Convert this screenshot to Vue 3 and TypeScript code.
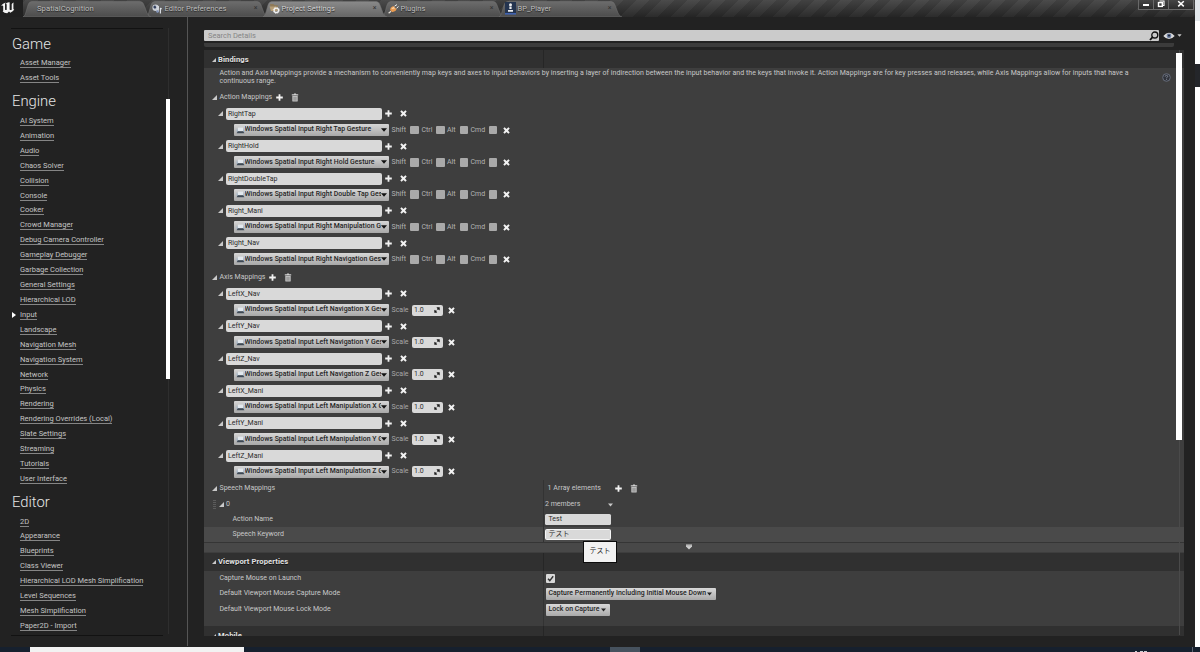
<script setup lang="ts">
interface Tab { label: string; icon: string; width: number; active?: boolean }
interface Section { title: string; items: string[] }

const tabs: Tab[] = [
  { label: 'SpatialCognition', icon: '', width: 128 },
  { label: 'Editor Preferences', icon: 'prefs', width: 122 },
  { label: 'Project Settings', icon: 'project', width: 124, active: true },
  { label: 'Plugins', icon: 'plug', width: 122 },
  { label: 'BP_Player', icon: 'pawn', width: 123 },
]

const sections: Section[] = [
  { title: 'Game', items: ['Asset Manager', 'Asset Tools'] },
  {
    title: 'Engine',
    items: ['AI System', 'Animation', 'Audio', 'Chaos Solver', 'Collision', 'Console', 'Cooker', 'Crowd Manager',
      'Debug Camera Controller', 'Gameplay Debugger', 'Garbage Collection', 'General Settings', 'Hierarchical LOD',
      'Input', 'Landscape', 'Navigation Mesh', 'Navigation System', 'Network', 'Physics', 'Rendering',
      'Rendering Overrides (Local)', 'Slate Settings', 'Streaming', 'Tutorials', 'User Interface'],
  },
  {
    title: 'Editor',
    items: ['2D', 'Appearance', 'Blueprints', 'Class Viewer', 'Hierarchical LOD Mesh Simplification',
      'Level Sequences', 'Mesh Simplification', 'Paper2D - Import'],
  },
]

const actions = [
  { name: 'RightTap', key: 'Windows Spatial Input Right Tap Gesture' },
  { name: 'RightHold', key: 'Windows Spatial Input Right Hold Gesture' },
  { name: 'RightDoubleTap', key: 'Windows Spatial Input Right Double Tap Gesture' },
  { name: 'Right_Mani', key: 'Windows Spatial Input Right Manipulation Gesture' },
  { name: 'Right_Nav', key: 'Windows Spatial Input Right Navigation Gesture' },
]
const axes = [
  { name: 'LeftX_Nav', key: 'Windows Spatial Input Left Navigation X Gesture' },
  { name: 'LeftY_Nav', key: 'Windows Spatial Input Left Navigation Y Gesture' },
  { name: 'LeftZ_Nav', key: 'Windows Spatial Input Left Navigation Z Gesture' },
  { name: 'LeftX_Mani', key: 'Windows Spatial Input Left Manipulation X Gesture' },
  { name: 'LeftY_Mani', key: 'Windows Spatial Input Left Manipulation Y Gesture' },
  { name: 'LeftZ_Mani', key: 'Windows Spatial Input Left Manipulation Z Gesture' },
]
const modifiers = [
  { label: 'Shift', cls: 'm-shift' },
  { label: 'Ctrl', cls: 'm-ctrl' },
  { label: 'Alt', cls: 'm-alt' },
  { label: 'Cmd', cls: 'm-cmd' },
]
</script>

<template>
  <div class="screen">
    <svg class="defs" width="0" height="0">
      <symbol id="i-caret" viewBox="0 0 5 5"><path d="M5 0V5H0Z" fill="#c9c9c9" /></symbol>
      <symbol id="i-plus" viewBox="0 0 7 7"><path d="M2.6 0.2H4.4V2.6H6.8V4.4H4.4V6.8H2.6V4.4H0.2V2.6H2.6Z" fill="#f2f2f2" /></symbol>
      <symbol id="i-x" viewBox="0 0 7 7"><path d="M0.3 1.5L1.6 0.3L3.5 1.9L5.4 0.3L6.7 1.5L5 3.5L6.7 5.5L5.4 6.7L3.5 5.1L1.6 6.7L0.3 5.5L2 3.5Z" fill="#f2f2f2" /></symbol>
      <symbol id="i-trash" viewBox="0 0 8 9">
        <path d="M0.8 1.3H2.7L3.2 0.4H4.8L5.3 1.3H7.2V2.4H0.8Z" fill="#d0d0d0" />
        <path d="M1.3 3H6.7V7.9Q6.7 8.6 6 8.6H2Q1.3 8.6 1.3 7.9Z" fill="#c4c4c4" />
        <path d="M2.9 3.8V7.7M4 3.8V7.7M5.1 3.8V7.7" stroke="#666" stroke-width="0.5" />
      </symbol>
      <symbol id="i-down" viewBox="0 0 6 4"><path d="M0 0.3H6L3 3.7Z" fill="currentColor" /></symbol>
      <symbol id="i-key" viewBox="0 0 9 7">
        <path d="M0.8 1.2Q2 3.8 1.4 5H7.6Q7 3.8 8.2 1.2V5H0.8Z" fill="#8db4dc" />
        <path d="M2 0.6H7V4H2Z" fill="#e2e8ee" />
        <path d="M1.8 4.2H7.2L8.4 6.2H0.6Z" fill="#3c4855" />
      </symbol>
    </svg>

    <div class="window">
      <header class="titlebar">
        <div class="brand">
          <svg width="16" height="16" viewBox="0 0 16 16">
            <path d="M1 5.8Q2.8 3.6 5.8 2.6Q4.8 3.6 5 4.8V9.4Q5.6 10.6 6.7 9.8V4.7Q6.7 3.8 5.8 3.6Q8 2.2 9.6 2.3V9.5Q10.4 10.6 11.7 9.7V4.2Q12 3 13.8 2.4Q13.4 3.2 13.4 4.2V9Q13.9 9.5 14.4 8.9Q13.2 11.8 10.3 12.8L9 11.4L7.2 13.2Q4 13 2.6 11.2Q3.2 11.2 3.2 10.2V6.2Q2.8 5 1 5.8Z" fill="#f4f4f4" />
          </svg>
        </div>
        <nav class="tabs">
          <div v-for="t in tabs" :key="t.label" class="tab" :class="{ active: t.active, first: !t.icon }" :style="{ width: t.width + 'px' }">
            <svg class="tab-shape" width="100%" height="16" :viewBox="`0 0 ${t.width} 16`">
              <defs>
                <linearGradient id="tabFill" x1="0" y1="0" x2="0" y2="1"><stop offset="0" stop-color="#6c6c6c" /><stop offset="1" stop-color="#4c4c4c" /></linearGradient>
                <linearGradient id="tabOn" x1="0" y1="0" x2="0" y2="1"><stop offset="0" stop-color="#8a8a8a" /><stop offset="1" stop-color="#666" /></linearGradient>
              </defs>
              <path :d="`M0 16Q2 15 3 11L5 4Q6 0.5 9 0.5H${t.width - 11}Q${t.width - 8} 0.5 ${t.width - 7} 4L${t.width - 4} 12Q${t.width - 2} 16 ${t.width} 16Z`" :fill="t.active ? 'url(#tabOn)' : 'url(#tabFill)'" stroke="#757575" stroke-width="0.5" />
            </svg>
            <span class="tab-icon">
              <svg v-if="t.icon === 'prefs'" width="10" height="10" viewBox="0 0 10 10">
                <circle cx="3.6" cy="3.8" r="3.2" fill="#c9cdd5" /><path d="M1 3L3 1.2L4.4 3.2L3 5Z" fill="#33405e" />
                <path d="M6.2 2V8M6.2 8L4.6 6.8M8.4 4V9.4M8.4 4L9.6 5" stroke="#dfe3ea" stroke-width="1.1" fill="none" /><circle cx="5.5" cy="7.5" r="1.3" fill="#7f90b5" />
              </svg>
              <svg v-else-if="t.icon === 'project'" width="11" height="11" viewBox="0 0 11 11">
                <path d="M1 1H4.5L5.5 2.2H9V7H2Z" fill="#8f7a58" /><path d="M0.5 3.5H7L8.6 8H2Z" fill="#b59d76" />
                <circle cx="7.3" cy="7.3" r="2.2" fill="none" stroke="#f2f2f2" stroke-width="1.3" /><circle cx="7.3" cy="7.3" r="3.1" fill="none" stroke="#f2f2f2" stroke-width="0.8" stroke-dasharray="1.2 1.24" />
              </svg>
              <svg v-else-if="t.icon === 'plug'" width="11" height="10" viewBox="0 0 11 10">
                <path d="M0.6 9.2L3 7.2" stroke="#e6e0d8" stroke-width="1.2" /><path d="M2.2 6Q2 3 5.4 2L8.6 5.2Q7.4 8.4 4 8Z" fill="#e89a50" /><path d="M3.4 5Q4 3.4 5.8 3L7 4.4Z" fill="#ffd9ad" />
                <path d="M6.5 2.2L9 0.6M8.6 4.4L10.4 2.4" stroke="#f0f0f0" stroke-width="1" />
              </svg>
              <svg v-else-if="t.icon === 'pawn'" width="11" height="13" viewBox="0 0 11 13">
                <rect width="11" height="11" fill="#24344f" /><rect y="11" width="11" height="1.6" fill="#3f62b0" />
                <circle cx="5.5" cy="2.8" r="1.5" fill="#eee" /><path d="M4.4 4.6H6.6V7H4.4ZM3 8H8V9.8H3Z" fill="#eee" />
              </svg>
            </span>
            <span class="tab-label">{{ t.label }}</span>
            <span v-if="t.icon" class="tab-close">×</span>
          </div>
        </nav>
        <div class="win-buttons">
          <span class="wb"><svg width="8" height="8" viewBox="0 0 8 8"><rect x="1" y="4" width="6" height="2" fill="#fff" /></svg></span>
          <span class="wb"><svg width="8" height="8" viewBox="0 0 8 8"><path d="M2.5 1H7V5.5H5.8" fill="none" stroke="#fff" stroke-width="1.1" /><rect x="1.5" y="2.6" width="3.8" height="3.8" fill="none" stroke="#fff" stroke-width="1.4" /></svg></span>
          <span class="wb wide"><svg width="8" height="8" viewBox="0 0 8 8"><path d="M1.2 1.2L6.8 6.4M6.8 1.2L1.2 6.4" stroke="#fff" stroke-width="1.5" /></svg></span>
        </div>
      </header>

      <div class="content">
        <aside class="sidebar">
          <div class="side-list">
            <section v-for="s in sections" :key="s.title">
              <h2>{{ s.title }}</h2>
              <div v-for="i in s.items" :key="i" class="side-row">
                <svg class="marker" width="4" height="6" viewBox="0 0 4 6"><path v-if="i === 'Input'" d="M0 0L4 3L0 6Z" fill="#fff" /></svg>
                <a>{{ i }}</a>
              </div>
            </section>
          </div>
          <div class="side-scroll"><div class="side-thumb"></div></div>
        </aside>

        <main class="details">
          <div class="search-row">
            <div class="search">
              <span>Search Details</span>
              <svg width="10" height="10" viewBox="0 0 10 10"><circle cx="5.8" cy="4" r="3" fill="none" stroke="#111" stroke-width="1.3" /><path d="M3.6 6.2L1 9" stroke="#111" stroke-width="1.8" /></svg>
            </div>
            <svg class="eye" width="12" height="8" viewBox="0 0 12 8"><path d="M0.3 4Q6 -2.6 11.7 4Q6 10.2 0.3 4Z" fill="#dcdcdc" /><circle cx="6" cy="3.8" r="2.4" fill="#6d7fa3" /><circle cx="6" cy="3.6" r="1.1" fill="#20283a" /></svg>
            <svg class="eye-down" width="5" height="3" viewBox="0 0 6 4"><use href="#i-down" /></svg>
          </div>

          <div class="strip"></div>

          <div class="scroll-area">
            <div class="cat-head">
              <svg width="4" height="4"><use href="#i-caret" /></svg><span>Bindings</span>
            </div>
            <div class="cat-body">
              <div class="desc">
                <p>Action and Axis Mappings provide a mechanism to conveniently map keys and axes to input behaviors by inserting a layer of indirection between the input behavior and the keys that invoke it. Action Mappings are for key presses and releases, while Axis Mappings allow for inputs that have a<br>continuous range.</p>
                <svg width="9" height="9" viewBox="0 0 9 9"><circle cx="4.5" cy="4.5" r="3.8" fill="#30333b" stroke="#666c7a" stroke-width="1" /><path d="M3.2 3.6Q3.3 2.4 4.5 2.4Q5.9 2.5 5.7 3.7Q5.5 4.3 4.6 4.7V5.3M4.6 6V6.9" fill="none" stroke="#858b99" stroke-width="0.9" /></svg>
              </div>

              <div class="group g-action">
                <svg width="5" height="5"><use href="#i-caret" /></svg><span>Action Mappings</span>
                <svg class="g-plus" width="7" height="7"><use href="#i-plus" /></svg>
                <svg class="g-trash" width="8" height="9"><use href="#i-trash" /></svg>
              </div>
              <template v-for="a in actions" :key="a.name">
                <div class="name-row">
                  <svg width="5" height="5"><use href="#i-caret" /></svg>
                  <div class="name-input">{{ a.name }}</div>
                  <svg class="n-plus" width="7" height="7"><use href="#i-plus" /></svg>
                  <svg class="n-x" width="7" height="7"><use href="#i-x" /></svg>
                </div>
                <div class="key-row">
                  <div class="combo"><svg width="9" height="7"><use href="#i-key" /></svg><span>{{ a.key }}</span><svg class="c-down" width="6" height="4"><use href="#i-down" /></svg></div>
                  <div v-for="m in modifiers" :key="m.label" class="mod" :class="m.cls"><span>{{ m.label }}</span><i></i></div>
                  <svg class="k-x" width="7" height="7"><use href="#i-x" /></svg>
                </div>
              </template>

              <div class="group g-axis">
                <svg width="5" height="5"><use href="#i-caret" /></svg><span>Axis Mappings</span>
                <svg class="g-plus" width="7" height="7"><use href="#i-plus" /></svg>
                <svg class="g-trash" width="8" height="9"><use href="#i-trash" /></svg>
              </div>
              <template v-for="a in axes" :key="a.name">
                <div class="name-row">
                  <svg width="5" height="5"><use href="#i-caret" /></svg>
                  <div class="name-input">{{ a.name }}</div>
                  <svg class="n-plus" width="7" height="7"><use href="#i-plus" /></svg>
                  <svg class="n-x" width="7" height="7"><use href="#i-x" /></svg>
                </div>
                <div class="key-row">
                  <div class="combo"><svg width="9" height="7"><use href="#i-key" /></svg><span>{{ a.key }}</span><svg class="c-down" width="6" height="4"><use href="#i-down" /></svg></div>
                  <span class="scale-label">Scale</span>
                  <div class="scale"><span>1.0</span><svg width="6" height="6" viewBox="0 0 6 6"><path d="M2.4 0.3H5.7V3.6L4.6 2.5L3.9 3.1L2.9 2.1L3.5 1.4ZM0.3 2.8L1.3 3.6L2 3.2L2.8 4L2.4 4.7L3.2 5.7H0.3Z" fill="#1b1b1b" /></svg></div>
                  <svg class="s-x" width="7" height="7"><use href="#i-x" /></svg>
                </div>
              </template>

              <div class="prop speech">
                <div class="left l1"><svg width="5" height="5"><use href="#i-caret" /></svg><span>Speech Mappings</span></div>
                <div class="right r-array"><span>1 Array elements</span><svg width="7" height="7"><use href="#i-plus" /></svg><svg class="g-trash" width="8" height="9"><use href="#i-trash" /></svg></div>
              </div>
              <div class="prop zero">
                <div class="left l2"><i class="grip"></i><svg width="5" height="5"><use href="#i-caret" /></svg><span>0</span></div>
                <div class="right r-mem"><span>2 members</span><svg width="5" height="4"><use href="#i-down" /></svg></div>
              </div>
              <div class="prop small">
                <div class="left l3">Action Name</div>
                <div class="right"><div class="text-input">Test</div></div>
              </div>
              <div class="prop small hover">
                <div class="left l3">Speech Keyword</div>
                <div class="right"><div class="text-input focus">テスト</div><div class="tooltip">テスト</div></div>
              </div>
              <div class="expander"><svg width="6" height="6" viewBox="0 0 6 6"><path d="M0 0.5H6V2.4L3 5.4L0 2.4Z" fill="#d0d0d0" /><path d="M0 1.8H6" stroke="#999" stroke-width="0.6" /></svg></div>
            </div>

            <div class="cat-head">
              <svg width="4" height="4"><use href="#i-caret" /></svg><span>Viewport Properties</span>
            </div>
            <div class="cat-body viewport">
              <div class="prop v1">
                <div class="left l4">Capture Mouse on Launch</div>
                <div class="right"><div class="check"><svg width="7" height="7" viewBox="0 0 7 7"><path d="M1 3.8L2.8 5.6L6.2 1.2" fill="none" stroke="#333" stroke-width="1.4" /></svg></div></div>
              </div>
              <div class="prop v2">
                <div class="left l4">Default Viewport Mouse Capture Mode</div>
                <div class="right"><div class="combo2 wide2"><span>Capture Permanently Including Initial Mouse Down</span><svg width="5" height="4"><use href="#i-down" /></svg></div></div>
              </div>
              <div class="prop v2">
                <div class="left l4">Default Viewport Mouse Lock Mode</div>
                <div class="right"><div class="combo2 narrow2"><span>Lock on Capture</span><svg width="5" height="4"><use href="#i-down" /></svg></div></div>
              </div>
            </div>
            <div class="cat-head">
              <svg width="4" height="4"><use href="#i-caret" /></svg><span>Mobile</span>
            </div>
            <div class="main-scroll"><div class="main-thumb"></div></div>
          </div>
        </main>
      </div>
    </div>

    <div class="desktop-edge"><i class="e1"></i><i class="e2"></i><i class="e3"></i></div>
    <footer class="taskbar">
      <i class="t-search"></i><i class="t-active"></i>
      <svg class="t-clock" width="12" height="2" viewBox="0 0 12 2"><path d="M0 1.5H2M5 1.5H8M9 1.5H12" stroke="#c8ccd2" stroke-width="1" /></svg>
      <i class="t-peek"></i>
    </footer>
  </div>
</template>

<style>
html, body { margin: 0; background: #222; overflow: hidden; }
</style>

<style scoped>
* { box-sizing: border-box; }
.screen { width: 1200px; height: 652px; display: grid; grid-template-columns: 1195px 5px; grid-template-rows: 647px 5px; overflow: hidden; background: #222; color: #c8c8c8; font: 7px/9px Roboto, "Noto Sans CJK JP", sans-serif; white-space: nowrap; }
.screen svg { display: block; flex: none; }
.defs { position: absolute; }
.window { display: flex; flex-direction: column; min-width: 0; background: #222; overflow: hidden; }

.titlebar { height: 17px; display: flex; flex: none; background: linear-gradient(rgba(255,255,255,.06), rgba(0,0,0,.32)), repeating-linear-gradient(135deg, #404040 0 9px, #363636 9px 18px); }
.brand { width: 23px; height: 17px; background: #202020; }
.tabs { display: flex; padding-top: 1px; }
.tab { position: relative; display: flex; align-items: center; height: 16px; margin-right: -5px; padding: 0 0 1px 6px; color: #bdbdbd; font-size: 7.5px; text-shadow: 0 1px 1px #222; }
.tab.active { z-index: 2; color: #d2d2d2; }
.tab-shape { position: absolute; inset: 0; }
.tab-icon { position: relative; width: 12.5px; flex: none; }
.tab.first .tab-icon { width: 8px; }
.tab.first { z-index: 1; font-size: 7.7px; padding-bottom: 2px; }
.tab-label { position: relative; letter-spacing: .03px; }
.tab-close { position: relative; margin-left: auto; margin-right: 10.5px; color: #333; font-size: 7px; text-shadow: none; }
.win-buttons { display: flex; margin-left: auto; height: 9.5px; margin-right: 1px; }
.wb { width: 15px; display: flex; justify-content: center; align-items: center; border: 1px solid #696969; border-top: 0; border-right: 0; background: linear-gradient(#454545, #2c2c2c); }
.wb.wide { width: 26px; border-right: 1px solid #696969; }

.content { flex: 1; display: flex; min-height: 0; }
.sidebar { width: 188px; height: 629px; display: flex; flex: none; border-right: 1px solid #555; padding-top: 11px; }
.side-list { width: 152px; height: 608px; margin-left: 11px; border-top: 1.5px solid #121212; border-bottom: 1.5px solid #121212; overflow: hidden; }
h2 { margin: 0; height: 27.6px; padding: 4px 0 0 1px; font: 300 14.8px/25px Roboto, sans-serif; color: #e6e6e6; }
section:first-child h2 { margin-top: -1.2px; }
.side-row { height: 14.93px; display: flex; align-items: center; padding-top: 1.2px; font-size: 7.5px; line-height: 9px; color: #c4c4c4; }
.marker { margin: 0 4px 0 1px; }
.side-row a { border-bottom: 1px solid #858585; height: 10px; line-height: 10px; }
.side-scroll { width: 5px; margin-left: 2.5px; height: 606px; background: linear-gradient(90deg, transparent 2px, #2e2e2e 2px 3px, transparent 3px); }
.side-thumb { width: 4.5px; height: 280px; margin-top: 71px; background: #fff; }

.details { flex: 1; min-width: 0; padding: 13px 0 0 16px; display: flex; flex-direction: column; }
.search-row { display: flex; align-items: center; height: 11px; }
.search { width: 955px; height: 11px; background: #cbcbcb; border-radius: 1px; display: flex; align-items: center; justify-content: space-between; padding-left: 4px; color: #868686; font-size: 7.5px; }
.eye { margin-left: 4px; }
.eye-down { margin-left: 2px; color: #c8c8c8; }
.strip { width: 970px; height: 3.5px; margin-top: 2px; background: #3b3b3b; border-radius: 0 0 2px 2px; }
.scroll-area { position: relative; width: 980px; height: 586px; margin-top: 3.5px; overflow: hidden; }
.cat-head { height: 18px; display: flex; align-items: center; gap: 2px; padding-left: 8px; color: #e2e2e2; font-size: 7.6px; font-weight: 700; letter-spacing: .1px; background: linear-gradient(90deg, transparent 339px, #262626 339px 340px, transparent 340px), #303030; text-shadow: 0 1px 0 #111; }
.cat-head svg { margin-top: 1px; }
.cat-body { height: 484.5px; background: #3e3e3e; }
.desc { height: 21.5px; display: flex; padding-top: 1px; }
.desc p { margin: 0 0 0 15.5px; width: 938px; line-height: 8.4px; font-size: 7px; letter-spacing: .038px; }
.desc svg { margin-top: 4px; margin-left: 4px; }
.group { display: flex; align-items: center; padding-left: 8px; }
.group span { margin-left: 2.5px; }
.g-action { height: 16.3px; }
.g-axis { height: 18.3px; padding-top: 1px; }
.g-plus { margin-left: 4px; }
.g-trash { margin-left: 8px; }
.name-row { height: 16.185px; display: flex; align-items: center; padding-left: 14px; }
.name-input { width: 156px; height: 12px; margin-left: 3px; padding-left: 2px; border-radius: 2px; background: #d9d9d9; color: #2b2b2b; line-height: 12.6px; }
.n-plus { margin-left: 3px; }
.n-x { margin-left: 8px; }
.key-row { height: 16.185px; display: flex; align-items: center; padding-left: 30px; }
.combo { width: 154.5px; height: 12px; display: flex; align-items: center; padding: 0 1px 0 1.5px; background: linear-gradient(#d6d6d6, #a8a8a8); border-radius: 1px; color: #242424; font-weight: 500; font-size: 6.9px; }
.combo span { width: 136.5px; overflow: hidden; flex: none; letter-spacing: .04px; line-height: 9.6px; }
.c-down { color: #111; }
.mod { display: flex; align-items: center; justify-content: space-between; color: #b4b4b4; }
.mod i { width: 8.5px; height: 8.5px; border-radius: 1px; background: #a9a9a9; }
.m-shift { width: 27px; margin-left: 3px; }
.m-ctrl { width: 23px; margin-left: 3px; }
.m-alt { width: 21px; margin-left: 2.5px; }
.m-cmd { width: 26.5px; margin-left: 2.5px; }
.k-x { margin-left: 6px; }
.scale-label { width: 20px; margin-left: 3px; color: #a8a8a8; }
.scale { width: 31px; height: 11px; display: flex; align-items: center; justify-content: space-between; padding: 0 3px 0 2.5px; border-radius: 2px; background: #d9d9d9; color: #2b2b2b; }
.s-x { margin-left: 5px; }

.prop { display: flex; }
.left { width: 340px; display: flex; align-items: center; border-right: 1px solid #333; flex: none; padding-top: 1px; }
.right { display: flex; align-items: center; position: relative; padding-left: 1px; }
.speech { height: 16.5px; }
.zero { height: 15.6px; }
.small { height: 15px; }
.hover { background: #4a4a4a; }
.l1 { padding-left: 8px; gap: 2.5px; }
.l2 { padding-left: 9px; gap: 2.5px; }
.grip { width: 3px; height: 9px; background: repeating-linear-gradient(#5c5c5c 0 1px, transparent 1px 2px); }
.l3 { padding-left: 28.5px; }
.l4 { padding-left: 15.5px; }
.r-array { padding-left: 3.5px; padding-top: 1px; letter-spacing: .07px; }
.r-array span { width: 67.5px; }
.r-mem { padding-top: 1px; }
.r-mem span { width: 62.5px; }
.r-mem svg { color: #c8c8c8; }
.text-input { width: 66px; height: 10.5px; padding-left: 3.5px; border-radius: 1.5px; background: #d9d9d9; color: #2b2b2b; line-height: 11px; }
.text-input.focus { border: 1px solid #f6f6f6; padding-left: 2.5px; line-height: 8.5px; }
.tooltip { position: absolute; z-index: 5; left: 39px; top: 14px; width: 34px; height: 22px; border: 1px solid #0c0c0c; background: #f2f2f2; color: #222; display: flex; align-items: center; justify-content: center; }
.expander { height: 10px; display: flex; justify-content: center; align-items: center; padding-right: 11px; background: #484848; border-top: 1px solid #353535; }
.viewport { height: 55.5px; background: linear-gradient(90deg, transparent 339px, #333 339px 340px, transparent 340px), #3e3e3e; }
.v1 { height: 15px; }
.v2 { height: 16px; }
.viewport .left { border-color: transparent; padding-top: 0; }
.viewport .right { padding-left: 1.5px; }
.check { width: 9px; height: 9px; border-radius: 1px; background: #d9d9d9; display: flex; align-items: center; justify-content: center; }
.combo2 { height: 12px; display: flex; align-items: center; justify-content: space-between; padding: 0 4px 0 3px; background: linear-gradient(#d8d8d8, #a9a9a9); border-radius: 1px; color: #242424; font-weight: 500; font-size: 6.9px; letter-spacing: .04px; }
.wide2 { width: 170.5px; }
.narrow2 { width: 64.5px; }
.main-scroll { position: absolute; top: 0; right: 2px; width: 6px; height: 585px; background: linear-gradient(90deg, transparent 3px, #4a4a4a 3px 4px, transparent 4px); }
.main-thumb { width: 6px; height: 387px; margin-top: 3px; background: #fff; }

.desktop-edge { display: flex; flex-direction: column; background: #fff; }
.e1 { height: 21px; background: #e4e8ec; }
.e2 { height: 43px; background: #fff; }
.e3 { height: 23px; background: #24262a; }
.taskbar { grid-column: 1 / 3; display: flex; background: #16202e; }
.t-search { width: 214px; margin-left: 30px; background: #f2f2f2; }
.t-active { width: 30px; margin-left: 366px; background: #46525e; }
.t-clock { margin: 3px 0 0 495px; }
.t-peek { width: 1px; margin-left: 45px; background: #5b6470; }
</style>
